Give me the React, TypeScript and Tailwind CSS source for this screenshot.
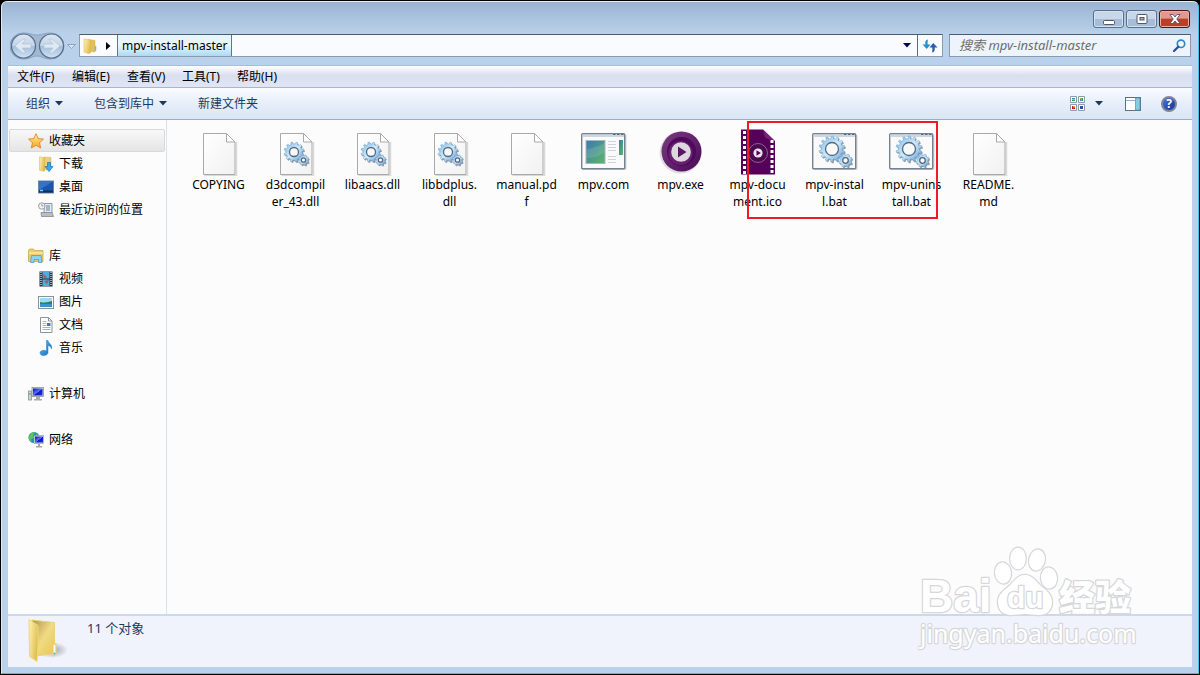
import React from 'react';

const gearPath = (cx: number, cy: number, r: number, teeth: number) => {
  const points: string[] = [];
  for (let i = 0; i < teeth; i++) {
    const step = (Math.PI * 2) / teeth;
    const a = i * step;
    [[0.0, 0.8], [0.28, 0.8], [0.38, 1], [0.72, 1], [0.82, 0.8]].forEach(([t, k]) => {
      points.push(`${(cx + Math.cos(a + t * step) * r * k).toFixed(2)} ${(cy + Math.sin(a + t * step) * r * k).toFixed(2)}`);
    });
  }
  return `M${points.join('L')}Z`;
};

const Gear = ({ cx, cy, r, teeth, hole }: { cx: number; cy: number; r: number; teeth: number; hole: number }) => (
  <g>
    <path d={gearPath(cx + 1, cy + 1.2, r, teeth)} fill="#4f5a66" opacity="0.6" />
    <path d={gearPath(cx, cy, r, teeth)} fill="url(#gear)" stroke="#6f9cc4" strokeWidth="0.5" />
    <circle cx={cx} cy={cy} r={hole} fill="#f7f8f9" stroke="#59697a" strokeWidth="1.3" />
  </g>
);

// shared gradients for the drawings below
const Defs = () => (
  <svg width="0" height="0" className="absolute" aria-hidden="true">
    <defs>
      <linearGradient id="gear" x1="0" y1="0" x2="1" y2="1">
        <stop offset="0" stopColor="#7db8ea" />
        <stop offset="0.5" stopColor="#cdeafc" />
        <stop offset="1" stopColor="#5a9ad6" />
      </linearGradient>
      <linearGradient id="page" x1="0" y1="0" x2="1" y2="1">
        <stop offset="0" stopColor="#ffffff" />
        <stop offset="1" stopColor="#f1f1f1" />
      </linearGradient>
      <linearGradient id="folder" x1="0" y1="0" x2="1" y2="0.4">
        <stop offset="0" stopColor="#fdf3b8" />
        <stop offset="1" stopColor="#e2bf4c" />
      </linearGradient>
      <linearGradient id="folderBack" x1="0" y1="0" x2="1" y2="1">
        <stop offset="0" stopColor="#b0924a" />
        <stop offset="0.5" stopColor="#f1da83" />
        <stop offset="1" stopColor="#e6c84e" />
      </linearGradient>
      <linearGradient id="screen" x1="0" y1="0" x2="1" y2="1">
        <stop offset="0" stopColor="#3b78b5" />
        <stop offset="1" stopColor="#5cb864" />
      </linearGradient>
      <linearGradient id="mpv" x1="0" y1="0" x2="1" y2="1">
        <stop offset="0" stopColor="#7a3a82" />
        <stop offset="1" stopColor="#4b0a59" />
      </linearGradient>
      <linearGradient id="star" x1="0" y1="0" x2="0" y2="1">
        <stop offset="0" stopColor="#fff2a0" />
        <stop offset="1" stopColor="#fba21b" />
      </linearGradient>
      <linearGradient id="blue" x1="0" y1="0" x2="1" y2="1">
        <stop offset="0" stopColor="#55c4f5" />
        <stop offset="1" stopColor="#1565b8" />
      </linearGradient>
      <linearGradient id="monitor" x1="0" y1="0" x2="1" y2="1">
        <stop offset="0" stopColor="#0a10a8" />
        <stop offset="0.5" stopColor="#5878ee" />
        <stop offset="0.55" stopColor="#0c18c8" />
        <stop offset="1" stopColor="#1c30d8" />
      </linearGradient>
      <linearGradient id="nav" x1="0" y1="0" x2="0" y2="1">
        <stop offset="0" stopColor="#dbe6f1" />
        <stop offset="0.48" stopColor="#c4d5e7" />
        <stop offset="0.52" stopColor="#a6bfd9" />
        <stop offset="1" stopColor="#cfe3f5" />
      </linearGradient>
      <radialGradient id="shade">
        <stop offset="0" stopColor="#7f8794" stopOpacity="0.8" />
        <stop offset="1" stopColor="#7f8794" stopOpacity="0" />
      </radialGradient>
    </defs>
  </svg>
);

const Page = ({ children }: { children?: React.ReactNode }) => (
  <svg width="48" height="48" viewBox="0 0 48 48">
    <path d="M9.5 47.5h32V14" fill="none" stroke="#d9d9d9" strokeWidth="1.5" />
    <path d="M8.5 5.5h23l8.500 8.500v32.500h-31.500z" fill="url(#page)" stroke="#a9a9a9" />
    <path d="M31.5 5.5v8.500h8.500z" fill="#fff" stroke="#a9a9a9" />
    {children}
  </svg>
);

const DllIcon = () => (
  <Page>
    <Gear cx={22} cy={24} r={10} teeth={12} hole={4.5} />
    <Gear cx={31.5} cy={32} r={5.4} teeth={8} hole={2.2} />
  </Page>
);

const WindowFrame = ({ children }: { children: React.ReactNode }) => (
  <svg width="48" height="48" viewBox="1 0 48 48">
    <rect x="3.5" y="7" width="44" height="35" rx="1" fill="#d3d5d8" />
    <rect x="2.7" y="5.700" width="43" height="35" rx="1" fill="#fafafa" stroke="#75828f" strokeWidth="1.4" />
    <rect x="3.5" y="6.5" width="41.5" height="2.5" fill="#ccd6e0" />
    <path d="M34 6.5h2.500m1.500 0h2.500m1.500 0h2.500" stroke="#4f6684" strokeWidth="1.2" />
    {children}
  </svg>
);

const BatIcon = () => (
  <WindowFrame>
    <Gear cx={22} cy={21} r={13} teeth={14} hole={6.5} />
    <Gear cx={35.5} cy={32.5} r={6.8} teeth={8} hole={2.8} />
  </WindowFrame>
);

const ComIcon = () => (
  <WindowFrame>
    <rect x="7" y="12.5" width="19" height="23" fill="url(#screen)" stroke="#a9b6c0" />
    <path d="M7.5 22c6-3 14-3 18-8v10c-5 5-12 6-18 6z" fill="#fff" opacity="0.12" />
    <path d="M29 13.5h8m-8 3h8m-8 3h8m-8 3h8m-8 6h8m-8 3h8m-8 3h8" stroke="#cfd2d6" />
    <rect x="40" y="12" width="4" height="15" fill="url(#screen)" />
  </WindowFrame>
);

const MpvIcon = () => (
  <svg width="48" height="48" viewBox="0 0 48 48">
    <circle cx="23.5" cy="24.5" r="21" fill="#dedede" />
    <circle cx="24.5" cy="23.5" r="20" fill="url(#mpv)" />
    <circle cx="24.5" cy="23.5" r="14.5" fill="#4f0a5b" />
    <circle cx="23.500" cy="25" r="12" fill="#692073" />
    <circle cx="24" cy="24" r="9.8" fill="#ded7df" />
    <path d="M21 18.5v11l8.500-5.500z" fill="#5b1565" />
  </svg>
);

const MpvDocumentIcon = () => (
  <svg width="48" height="48" viewBox="0 0 48 48">
    <path d="M7 1.5h22l12 11.500v33.500h-34z" fill="#560059" />
    <path d="M29 1.5l2 8 10 4" fill="#762079" />
    <path d="M10.5 3v43" stroke="#fff" strokeWidth="3" strokeDasharray="3 2" />
    <path d="M38 12v34" stroke="#fff" strokeWidth="3" strokeDasharray="3 2" />
    <circle cx="24" cy="25" r="9.5" fill="#4b0a50" stroke="#aa84ac" strokeWidth="0.7" />
    <circle cx="24" cy="25" r="4.6" fill="#eee4ef" />
    <path d="M22.5 22.2v5.600l4.300-2.800z" fill="#560059" />
  </svg>
);

const StarIcon = () => (
  <svg width="16" height="16" viewBox="0 0 16 16">
    <path d="M8 .7l2.200 4.900 5.300.5-4 3.600 1.200 5.300L8 12.300 3.300 15l1.200-5.300-4-3.600 5.300-.5z" fill="url(#star)" stroke="#e2832a" strokeWidth="0.9" strokeLinejoin="round" />
  </svg>
);

const FolderIcon = () => (
  <svg width="16" height="16" viewBox="0 0 16 16">
    <path d="M7 1.5l6 1v11.500l-6-.5z" fill="#e2bf58" stroke="#d5b349" strokeWidth="0.5" />
    <path d="M2 1l5 .5 1.500 2v11.500l-2 .5-4.500-1.500z" fill="url(#folder)" stroke="#d8b64a" strokeWidth="0.5" />
    <path d="M13.5 8v5" stroke="#71b9e8" strokeWidth="1.5" />
  </svg>
);

const DownloadIcon = () => (
  <svg width="16" height="16" viewBox="0 0 16 16">
    <path d="M6 1l7 .5v12l-7 .5z" fill="#ead079" stroke="#d2b359" strokeWidth="0.5" />
    <path d="M1.5.8l5 1v13.500l-5-1z" fill="url(#folder)" stroke="#d2b359" strokeWidth="0.5" />
    <path d="M9.5 6.5h3v4h2.500l-4 5-4-5h2.500z" fill="#35a7ef" stroke="#1674bd" strokeWidth="0.7" />
  </svg>
);

const DesktopIcon = () => (
  <svg width="16" height="16" viewBox="0 0 16 16">
    <rect x="0.5" y="2" width="15" height="12" fill="#1b55b0" stroke="#72869c" />
    <path d="M1 11V2.500h14z" fill="#3672c8" />
    <path d="M1 12.5h14" stroke="#0f2f5c" strokeWidth="2" />
    <path d="M2 11.5h3" stroke="#6bd8fa" strokeWidth="1.5" />
  </svg>
);

const RecentIcon = () => (
  <svg width="16" height="16" viewBox="0 0 16 16">
    <path d="M6.5 1.500h7.500v9.500h-8z" fill="#e4eaef" stroke="#858e96" strokeWidth="0.9" />
    <path d="M8 4h4m-4 2h4m-4 2h4" stroke="#5f80ab" />
    <path d="M3 10.5h11l1.500 4h-12z" fill="#b9bec3" stroke="#83898f" strokeWidth="0.8" />
    <circle cx="3.8" cy="4" r="3.2" fill="#f4f5f6" stroke="#8c9399" strokeWidth="0.9" />
    <path d="M3.8 2v2h1.600" fill="none" stroke="#777" strokeWidth="0.7" />
  </svg>
);

const LibraryIcon = () => (
  <svg width="16" height="16" viewBox="0 0 16 16">
    <path d="M.5 2.5l1-1.500h4l1 1.500h8.500v11h-14.500z" fill="#e9ce70" stroke="#c9a94c" strokeWidth="0.8" />
    <path d="M1 5h14" stroke="#fff4b8" />
    <path d="M2.5 14.5l1-7h9.500l1 7h-3.500v-3h-4.500v3z" fill="#8cd3f2" stroke="#4b9ec9" strokeWidth="0.8" />
  </svg>
);

const VideoIcon = () => (
  <svg width="16" height="16" viewBox="0 0 16 16">
    <rect x="1.5" y="0.5" width="13" height="15" fill="#26333c" />
    <rect x="4.5" y="1" width="7" height="6.5" fill="#54a9dd" />
    <rect x="4.5" y="8.5" width="7" height="6.5" fill="#54a9dd" />
    <path d="M5 3l4 3-3 1.500zM6 10l5-1-2 4z" fill="#94605a" />
    <path d="M3 1v14M13 1v14" stroke="#e8edf0" strokeWidth="1.2" strokeDasharray="1 1" />
  </svg>
);

const PictureIcon = () => (
  <svg width="16" height="16" viewBox="0 0 16 16">
    <rect x="0.5" y="2.5" width="15" height="12" fill="#fff" stroke="#8b949b" />
    <rect x="2" y="4" width="12" height="9" fill="#9fdaf3" />
    <path d="M2 8c4 1 8 .5 12-1v3H2z" fill="#327f66" />
    <path d="M2 10h12v3H2z" fill="#3c94cf" />
  </svg>
);

const DocumentIcon = () => (
  <svg width="16" height="16" viewBox="0 0 16 16">
    <path d="M2.5.5h8l3.500 3.500v11.500h-11.500z" fill="#fff" stroke="#8a929b" />
    <path d="M10.5.5v3.500h3.500" fill="none" stroke="#8a929b" />
    <path d="M4.5 4.5h4m-4 2h4m-4 2h4m-4 2h8m-8 2h8" stroke="#a3a9bd" strokeWidth="0.9" />
    <rect x="9" y="6" width="3.5" height="3" fill="#2c83c3" />
  </svg>
);

const MusicIcon = () => (
  <svg width="16" height="16" viewBox="0 0 16 16">
    <path d="M8.5.5h1.500c.5 3 4.500 3.500 3.500 8.500-.5-2-1.500-3-3.500-3.500v7c0 4-8 4-8 .5 0-2.500 4-3.500 6.500-2z" fill="url(#blue)" stroke="#237cc1" strokeWidth="0.5" />
  </svg>
);

const ComputerIcon = () => (
  <svg width="16" height="16" viewBox="0 0 16 16">
    <rect x="0.5" y="5" width="3" height="9" fill="#cdd0d2" stroke="#8e9295" strokeWidth="0.8" />
    <path d="M1 8h2" stroke="#50a94e" />
    <rect x="4" y="1.5" width="11.5" height="9" fill="#d5d8da" stroke="#909498" strokeWidth="0.8" />
    <rect x="5" y="2.5" width="9.5" height="7" fill="url(#monitor)" />
    <path d="M8 11h4v2h2v1.500H6V13h2z" fill="#a8acb0" />
  </svg>
);

const NetworkIcon = () => (
  <svg width="16" height="16" viewBox="0 0 16 16">
    <circle cx="6" cy="5.500" r="5.5" fill="#2287cc" />
    <path d="M1 4.500c2-5 5-4.500 6-4L5 3.500l1 2-3 2 1 3c-2-1-3.500-3-3-6zM8 1.500l3 2-3 1z" fill="#5fc457" />
    <rect x="6" y="3.500" width="9.5" height="8" fill="#d5d8da" stroke="#909498" strokeWidth="0.6" />
    <rect x="7" y="4.500" width="8" height="6" fill="url(#monitor)" />
    <path d="M10 12h2v2h2v1.500H8V14h2z" fill="#a0a5aa" />
  </svg>
);

const LargeFolderIcon = () => (
  <svg width="48" height="48" viewBox="0 0 48 48">
    <ellipse cx="33" cy="34" rx="16" ry="8" fill="url(#shade)" />
    <path d="M13 4l22.500 2.500v31l-22.500 3z" fill="url(#folderBack)" stroke="#e8d37d" />
    <path d="M10 3.5l9 6v18l-1 18-7.500-5z" fill="url(#folder)" stroke="#ecd880" />
    <path d="M34 28l3.500-1v12l-3.500 2z" fill="#eed572" />
    <path d="M35.5 29v8" stroke="#fff" strokeWidth="1.6" />
    <circle cx="35.5" cy="37.5" r="1" fill="#4db4ee" />
  </svg>
);

const Caret = () => (
  <svg width="8" height="5" viewBox="0 0 8 5"><path d="M0 0h8L4 4.500z" fill="#1e395b" /></svg>
);

const navGroups = [
  {
    title: '收藏夹', icon: StarIcon, active: true,
    items: [
      { name: '下载', icon: DownloadIcon },
      { name: '桌面', icon: DesktopIcon },
      { name: '最近访问的位置', icon: RecentIcon },
    ],
  },
  {
    title: '库', icon: LibraryIcon,
    items: [
      { name: '视频', icon: VideoIcon },
      { name: '图片', icon: PictureIcon },
      { name: '文档', icon: DocumentIcon },
      { name: '音乐', icon: MusicIcon },
    ],
  },
  { title: '计算机', icon: ComputerIcon, items: [] },
  { title: '网络', icon: NetworkIcon, items: [] },
];

const files = [
  { name: ['COPYING'], icon: Page },
  { name: ['d3dcompil', 'er_43.dll'], icon: DllIcon },
  { name: ['libaacs.dll'], icon: DllIcon },
  { name: ['libbdplus.', 'dll'], icon: DllIcon },
  { name: ['manual.pd', 'f'], icon: Page },
  { name: ['mpv.com'], icon: ComIcon },
  { name: ['mpv.exe'], icon: MpvIcon },
  { name: ['mpv-docu', 'ment.ico'], icon: MpvDocumentIcon },
  { name: ['mpv-instal', 'l.bat'], icon: BatIcon },
  { name: ['mpv-unins', 'tall.bat'], icon: BatIcon },
  { name: ['README.', 'md'], icon: Page },
];

const menus = ['文件(F)', '编辑(E)', '查看(V)', '工具(T)', '帮助(H)'];

const TitleBar = () => (
  <header className="flex h-8 shrink-0 justify-end gap-0.5 pt-2 pr-0.5">
    <button aria-label="最小化" className="flex h-[18px] w-[31px] items-center justify-center rounded-[3px] border border-[#596f8c] bg-linear-to-b from-[#c8d7e9] from-50% to-[#a5bdd8] to-50% pt-0.5 shadow-[inset_0_0_0_1px_#d5e2f0]">
      <svg width="12" height="12" viewBox="0 0 12 12"><rect x="0.5" y="6.5" width="11" height="4" rx="1" fill="#fff" stroke="#535666" /></svg>
    </button>
    <button aria-label="最大化" className="flex h-[18px] w-[31px] items-center justify-center rounded-[3px] border border-[#596f8c] bg-linear-to-b from-[#c8d7e9] from-50% to-[#a5bdd8] to-50% shadow-[inset_0_0_0_1px_#d5e2f0]">
      <svg width="12" height="10" viewBox="0 0 12 10">
        <rect x="1" y="0.5" width="10" height="9" rx="1" fill="#fff" stroke="#535666" />
        <rect x="4" y="3.5" width="4" height="2.5" fill="#9db4d0" stroke="#535666" />
      </svg>
    </button>
    <button aria-label="关闭" className="flex h-[18px] w-[31px] items-center justify-center rounded-[3px] border border-[#4f1420] bg-linear-to-b from-[#e0998c] from-45% to-[#bd3e28] to-50% shadow-[inset_0_0_0_1px_#eab0a4]">
      <svg width="12" height="10" viewBox="0 0 12 10">
        <path d="M1 .5h3l2 2.500 2-2.500h3L7.800 5l3.200 4.500H8L6 7 4 9.500H1L4.200 5z" fill="#fff" stroke="#535666" strokeWidth="0.9" />
      </svg>
    </button>
  </header>
);

const AddressBar = () => (
  <div className="flex h-[31px] shrink-0 items-start pr-px pl-0.5">
    <div className="flex h-6 w-[69px] shrink-0 items-center">
      <svg width="70" height="28" viewBox="0 0 70 28" className="shrink-0">
        <path d="M13 1c8 0 9 2 14 2s6-2 14-2a13 13 0 0 1 0 26c-8 0-9-3-14-3s-6 3-14 3a13 13 0 0 1 0-26z" fill="#a2b9d3" stroke="#88a3c2" />
        <circle cx="13.5" cy="14" r="12" fill="url(#nav)" stroke="#586f89" strokeWidth="1.2" />
        <circle cx="41.5" cy="14" r="12" fill="url(#nav)" stroke="#586f89" strokeWidth="1.2" />
        <path d="M5 14l8-7h3l-4 5h9v4h-9l4 5h-3z" fill="#e0e9f3" stroke="#b0c3d9" strokeWidth="0.7" />
        <path d="M50 14l-8-7h-3l4 5h-9v4h9l-4 5h3z" fill="#e0e9f3" stroke="#b0c3d9" strokeWidth="0.7" />
        <path d="M57.5 12.5h8l-4 4z" fill="#d8e5f2" stroke="#8fa5bf" />
      </svg>
    </div>
    <div className="flex h-[23px] min-w-0 flex-1 border border-[#8b9aac] border-t-[#4e5b6b] bg-[#f9fbfe]">
      <div className="flex w-[37px] items-center gap-2 pl-0.5">
        <FolderIcon />
        <svg width="5" height="8" viewBox="0 0 5 8"><path d="M0 0l4.500 4L0 8z" fill="#000" /></svg>
      </div>
      <button className="border-x border-[#3c7fb1] bg-linear-to-b from-[#e7f5fd] from-50% to-[#a9dbf5] px-1 leading-5">mpv-install-master</button>
      <button aria-label="以前的位置" className="ml-auto px-1.5">
        <svg width="8" height="5" viewBox="0 0 8 5"><path d="M0 0h8L4 4.500z" fill="#00005c" /></svg>
      </button>
      <button aria-label="刷新" className="flex w-[25px] items-center justify-center border-l border-[#5e6d7e]">
        <svg width="16" height="14" viewBox="0 0 16 14">
          <path d="M6 .5C3.500 1 3 2.500 3.300 5.500H.5L4.800 10 8.500 5.500H5.700C5.500 3 5.700 2 6 .5z" fill="#2792cf" />
          <path d="M10 13.500c2.500-.5 3-2 2.700-5h2.800L11.200 4 7.500 8.500h2.800c.2 2.500 0 3.500-.3 5z" fill="#285eaa" />
        </svg>
      </button>
    </div>
    <div className="ml-1.5 flex h-[23px] w-[242px] items-center border border-[#8b9aac] border-t-[#4e5b6b] bg-[#eef4fb] pr-1 pl-[9px]">
      <input type="text" aria-label="搜索" placeholder="搜索 mpv-install-master" className="min-w-0 flex-1 bg-transparent text-[13px] italic outline-none placeholder:text-[#6d6d6d]" />
      <svg width="13" height="13" viewBox="0 0 13 13">
        <circle cx="8" cy="4.8" r="3.7" fill="#f3faff" stroke="#3086c7" strokeWidth="1.7" />
        <path d="M5.3 7.7L1 12" stroke="#294f9c" strokeWidth="2.2" strokeLinecap="round" />
      </svg>
    </div>
  </div>
);

const Toolbar = () => (
  <div className="flex h-8 shrink-0 items-center border-b border-[#9aaecb] bg-linear-to-b from-[#fafcff] via-[#e6eefa] via-50% to-[#dbe6f4] pl-[18px] text-[#1e395b]">
    <button className="flex w-[68px] items-center gap-[5px]">组织<Caret /></button>
    <button className="flex w-[104px] items-center gap-[5px]">包含到库中<Caret /></button>
    <button>新建文件夹</button>
    <div className="ml-auto flex items-center pr-[15px]">
      <button aria-label="更改您的视图" className="flex items-center gap-2.5">
        <svg width="15" height="15" viewBox="0 0 15 15">
          <path d="M.5.5h6v6h-6zM8.500.5h6v6h-6zM.5 8.500h6v6h-6zM8.500 8.500h6v6h-6z" fill="#fff" stroke="#8d9caf" />
          <path d="M2 2h3v1.500H2zM10 2h1.500v3H10z" fill="#3b8bb8" />
          <path d="M2 4h3v1H2zM11.500 2H13v3h-1.500z" fill="#39a04c" />
          <path d="M2 10h3v3H2z" fill="#b8221c" />
          <path d="M10 10h3v3h-3z" fill="#27539b" />
          <path d="M3 10h2v1.500H3zM10 2h1v1h-1z" fill="#e5a92c" />
        </svg>
        <Caret />
      </button>
      <button aria-label="显示预览窗格" className="ml-[22px]">
        <svg width="16" height="14" viewBox="0 0 16 14">
          <rect x="0.5" y="0.5" width="15" height="13" fill="#fff" stroke="#57728d" />
          <path d="M1 3.500h9" stroke="#9ab0c6" />
          <rect x="10.5" y="1" width="4.5" height="12" fill="#86cbe2" stroke="#4f93ae" strokeWidth="0.7" />
        </svg>
      </button>
      <button aria-label="获取帮助" className="ml-5 flex size-4 items-center justify-center rounded-full border-2 border-[#7d8698] bg-linear-to-br from-[#4e73d8] to-[#122e9a] text-[12px] leading-3 font-bold text-white">?</button>
    </div>
  </div>
);

const NavPane = () => (
  <nav className="flex w-[159px] shrink-0 flex-col gap-[23px] border-r border-[#d6e5f5] py-[9px] pl-px">
    {navGroups.map(group => (
      <div key={group.title}>
        <a
          href="#"
          className={
            group.active
              ? 'mr-px flex h-[23px] items-center gap-[5px] rounded-[2px] border border-[#d9d9d9] bg-linear-to-b from-[#f8f8f8] to-[#e5e5e5] pl-[18px]'
              : 'flex h-[23px] items-center gap-[5px] pl-[19px]'
          }
        >
          <group.icon />
          {group.title}
        </a>
        {group.items.map(item => (
          <a key={item.name} href="#" className="flex h-[23px] items-center gap-[5px] pl-[29px]">
            <item.icon />
            {item.name}
          </a>
        ))}
      </div>
    ))}
  </nav>
);

const Watermark = () => (
  <svg width="220" height="106" viewBox="0 0 220 106" className="pointer-events-none absolute right-[60px] bottom-[21px]">
    <g fill="#fff" stroke="#d6d7db" strokeWidth="2.5" paintOrder="stroke" strokeLinejoin="round">
      <text x="2" y="66" fontFamily="Liberation Sans, sans-serif" fontSize="46" fontWeight="700">Bai</text>
      <ellipse cx="85" cy="27" rx="8" ry="10.5" transform="rotate(-6 85 27)" />
      <ellipse cx="100" cy="12.5" rx="7.8" ry="10.8" />
      <ellipse cx="119" cy="14" rx="7.8" ry="10.5" transform="rotate(12 119 14)" />
      <ellipse cx="131" cy="32" rx="8" ry="10.5" transform="rotate(-6 131 32)" />
      <path d="M107 29c8 0 12 8 17 12 6 4 10 9 10 15 0 9-6 13-13 13-5 0-9-1-14-1s-9 1-14 1c-8 0-13-5-13-13 0-7 5-11 10-15 6-5 9-12 17-12z" />
      <text x="89" y="62" fontFamily="Liberation Sans, sans-serif" fontSize="30" fontWeight="700">du</text>
      <text x="141" y="65" fontFamily="Noto Sans CJK SC, sans-serif" fontSize="36" fontWeight="900">经验</text>
      <text x="2" y="97" fontFamily="Noto Sans, sans-serif" fontSize="25">jingyan.baidu.com</text>
    </g>
  </svg>
);

export default function App() {
  return (
    <div className="flex min-h-screen flex-col bg-black p-px font-['Noto_Sans','Noto_Sans_CJK_SC',sans-serif] text-[12px] leading-[17px] text-black">
      <Defs />
      <div className="relative flex flex-1 flex-col rounded-t-md border border-t-[#e4edf6] border-r-[#3cc4e0] border-b-[#3cc4e0] border-l-[#dce8f4] bg-[#b9d1ea] bg-[linear-gradient(#9ab4d2,#b9d1ea_32px)] px-1.5 pb-1.5">
        <TitleBar />
        <AddressBar />
        <div className="flex h-[23px] shrink-0 items-center border-y border-t-[#a8bfdb] border-b-[#aab6cd] bg-linear-to-b from-white via-[#dadff0] via-45% to-[#e1e6f6] pl-[9px]">
          {menus.map(menu => (
            <button key={menu} className="w-[55px] text-left">{menu}</button>
          ))}
        </div>
        <Toolbar />
        <main className="flex flex-1 bg-[#fcfcfc]">
          <NavPane />
          <section className="relative flex-1 pt-2 pl-[13px]">
            <ul className="flex flex-wrap">
              {files.map(file => (
                <li key={file.name.join('')} className="flex w-[77px] flex-col items-center text-center">
                  <file.icon />
                  {file.name.map(line => (
                    <span key={line}>{line}</span>
                  ))}
                </li>
              ))}
            </ul>
            <div className="pointer-events-none absolute top-px left-[580px] h-[98px] w-[191px] border-2 border-[#ed1c24]" />
          </section>
        </main>
        <footer className="flex h-[53px] shrink-0 border-t-2 border-[#cbd9eb] bg-[#f0f3fb] pl-[11px] text-[13px] text-[#1e395b]">
          <LargeFolderIcon />
          <p className="pt-1 pl-5">11 个对象</p>
        </footer>
        <Watermark />
      </div>
    </div>
  );
}
